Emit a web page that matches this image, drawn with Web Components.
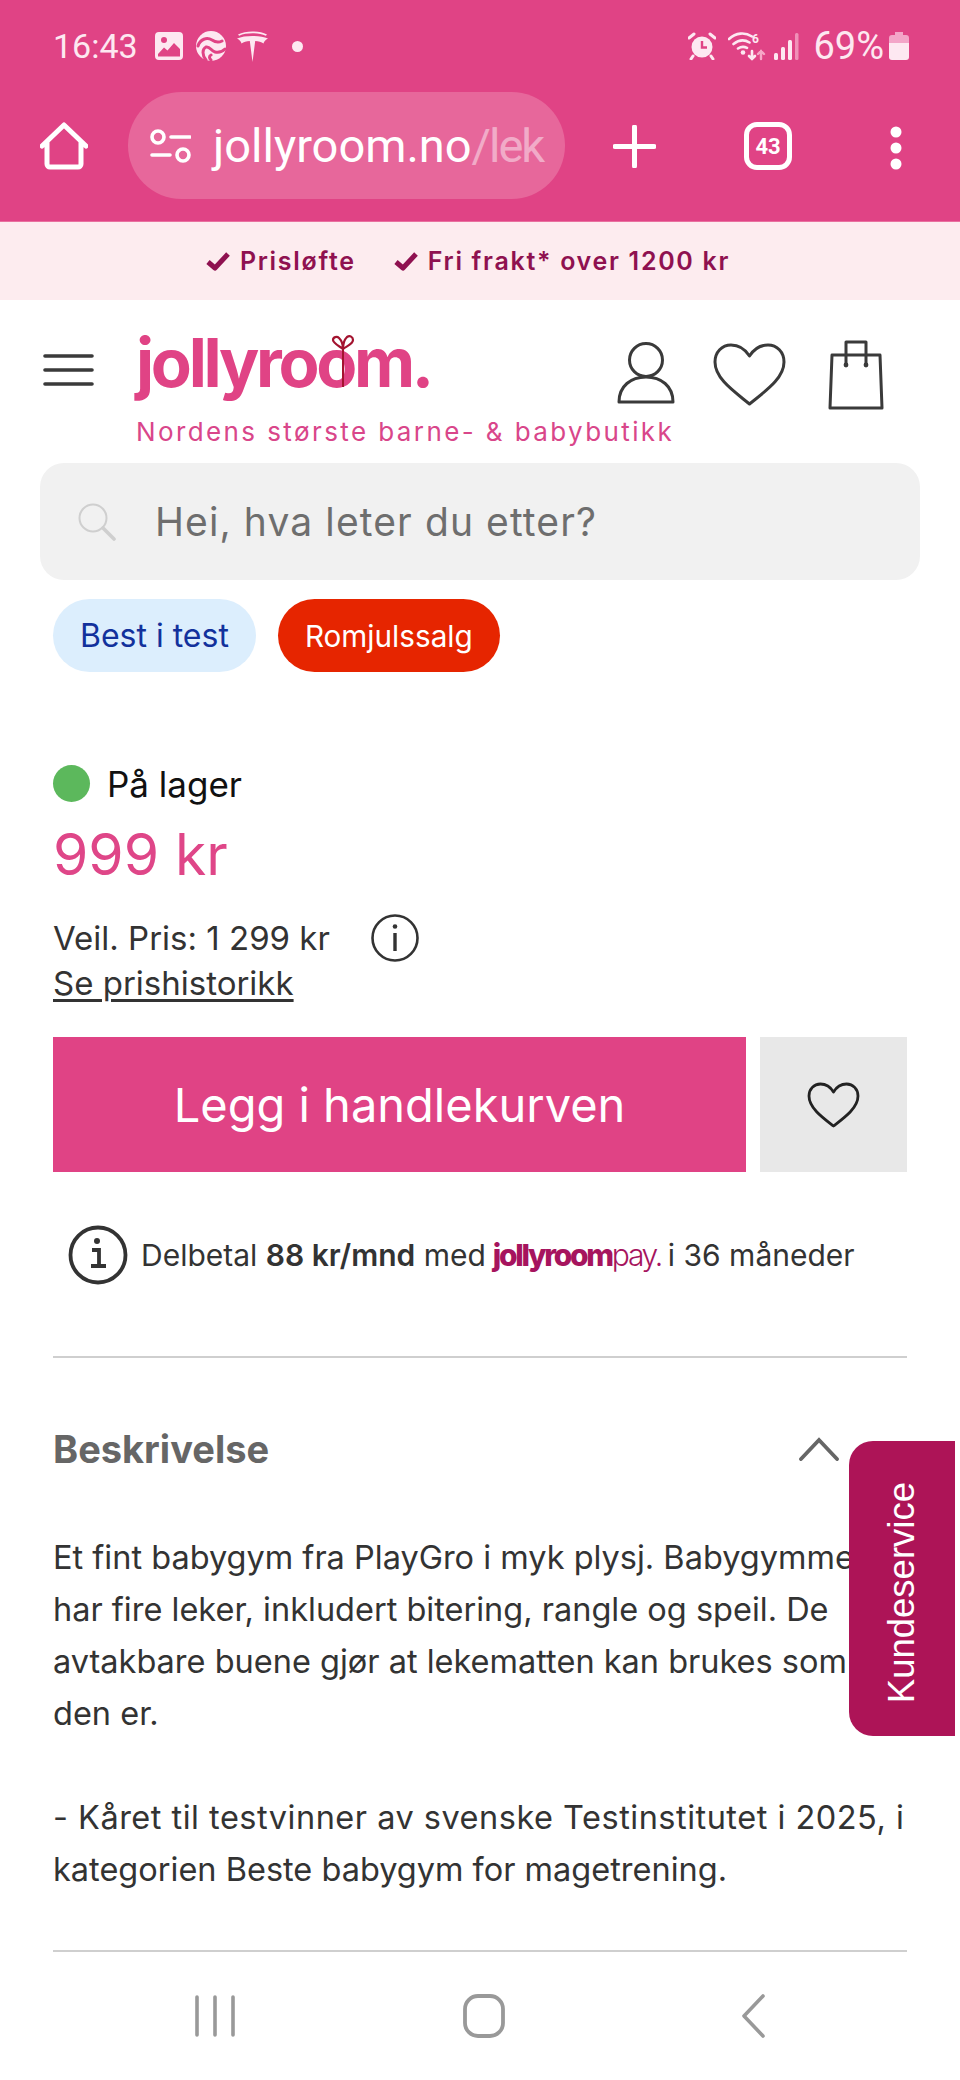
<!doctype html>
<html lang="no">
<head>
<meta charset="utf-8">
<title>Jollyroom</title>
<style>
  html, body { margin: 0; padding: 0; background: #fff; }
  body { width: 960px; height: 2080px; overflow: hidden; position: relative; font-family: Inter, "Liberation Sans", sans-serif; }
</style>
</head>
<body>

<template id="status-bar-template">
  <style>
    :host { display: flex; align-items: center; height: 88px; padding: 4px 51px 0 53px; box-sizing: border-box; background: #e04385; color: #fde8f1; font: 400 34px Roboto, sans-serif; }
    .left, .right { display: flex; align-items: center; }
    .right { margin-left: auto; }
    svg { display: block; flex: none; }
    .time { margin-right: 17px; }
    .pct { margin: 0 5px 0 14px; font-size: 38px; }
  </style>
  <div class="left">
    <span class="time">16:43</span>
    <svg width="28" height="28" viewBox="0 0 28 28"><path fill="#fde8f1" fill-rule="evenodd" d="M4 0h20a4 4 0 0 1 4 4v20a4 4 0 0 1-4 4H4a4 4 0 0 1-4-4V4a4 4 0 0 1 4-4zM3 22v2.500h22V17l-6-6-6.500 7.500-3.500-3z"/><circle cx="9" cy="8" r="3" fill="#e04385"/></svg>
    <svg style="margin-left:13px" width="30" height="30" viewBox="0 0 30 30"><circle cx="15" cy="15" r="15" fill="#fde8f1"/><path fill="none" stroke="#e04385" stroke-width="3" stroke-linecap="round" d="M2 15C4 8 11 6 16 9c3 2 6 3 10 1M10 29c-4-5-4-11 0-13 4-1 5 4 9 5 4 1 7 0 10-3M15 29c-2-2-2-4 0-5"/></svg>
    <svg style="margin-left:11px" width="31" height="31" viewBox="0 0 31 31"><path fill="#fde8f1" d="M15.500 31 12.800 10C9.500 10.200 6.500 11 4.500 12.500 4 10.500 2.500 8.500 0 7.500 4 5.800 9.500 5 15.500 5S27 5.800 31 7.500c-2.500 1-4 3-4.500 5-2-1.500-5-2.300-8.300-2.500z"/><path fill="#fde8f1" d="M1 3.500C5 1.500 10 .5 15.500.5s10.500 1 14.500 3c-.5.600-.8.800-1.200 1.200C25 3 20.500 2.300 15.500 2.300S6 3 2.200 4.700C1.800 4.300 1.500 4 1 3.500z"/></svg>
    <svg style="margin-left:24px" width="11" height="11" viewBox="0 0 11 11"><circle cx="5.500" cy="5.500" r="5.500" fill="#fde8f1"/></svg>
  </div>
  <div class="right">
    <svg width="28" height="28" viewBox="0 0 28 28"><circle cx="14" cy="15" r="10.500" fill="#fde8f1"/><path d="M14 9v6.500h5" fill="none" stroke="#e04385" stroke-width="2.400"/><path d="M1 6l5-4M27 6l-5-4M5 24l-2 3M23 24l2 3" stroke="#fde8f1" stroke-width="3" stroke-linecap="round"/></svg>
    <svg style="margin-left:12px" width="38" height="30" viewBox="0 0 38 30"><g fill="none" stroke="#fde8f1" stroke-width="2.600" stroke-linecap="round"><path d="M1 8c7-6.500 16-7 23-2.500M5.500 13c5-4 11-4.500 16-1.500M10 17.500c3-2 6-2.200 9-.6"/><path d="M24 20v8M21 25l3 3 3-3"/></g><circle cx="15" cy="21.500" r="2.300" fill="#fde8f1"/><g fill="none" stroke="#f7a6c7" stroke-width="2.400" stroke-linecap="round"><path d="M33 28v-8M30 23l3-3 3 3"/></g><text x="24" y="12" font-size="12" font-weight="700" fill="#fde8f1" font-family="Roboto, sans-serif">6</text></svg>
    <svg style="margin-left:8px" width="25" height="27" viewBox="0 0 25 27"><g fill="#fde8f1"><rect x="0" y="20" width="4" height="7" rx="1.500"/><rect x="7" y="14" width="4" height="13" rx="1.500"/><rect x="14" y="7" width="4" height="20" rx="1.500"/></g><rect x="21" y="0" width="3.500" height="27" rx="1.500" fill="#f090b8"/></svg>
    <span class="pct">69%</span>
    <svg width="20" height="28" viewBox="0 0 20 28"><path fill="#f3a5c8" d="M6 0h8v3h3a3 3 0 0 1 3 3v6H0V6a3 3 0 0 1 3-3h3z"/><path fill="#fde8f1" d="M0 11h20v14a3 3 0 0 1-3 3H3a3 3 0 0 1-3-3z"/></svg>
  </div>
</template>

<template id="browser-toolbar-template">
  <style>
    :host { display: flex; align-items: flex-start; height: 134px; box-sizing: border-box; padding-top: 4px; background: #e04385; color: #fff; border-bottom: 1px solid #e9709f; }
    svg { display: block; flex: none; }
    .home { margin: 30px 0 0 40px; }
    .url { width: 437px; height: 107px; margin-left: 40px; box-sizing: border-box; padding: 0 0 0 22px; border-radius: 54px; background: #e7679b; display: flex; align-items: center; }
    .addr { margin-left: 22px; font: 400 47px Roboto, sans-serif; white-space: nowrap; }
    .addr span { opacity: .45; letter-spacing: -2px; }
    .plus { margin: 33px 0 0 48px; }
    .tabs { margin: 30px 0 0 88px; width: 48px; height: 48px; box-sizing: border-box; border: 5px solid #fff; border-radius: 13px; display: flex; align-items: center; justify-content: center; font: 700 22px Roboto, sans-serif; }
    .more { margin: 34px 0 0 98px; }
  </style>
  <svg class="home" width="48" height="48" viewBox="0 0 48 48"><path d="M2 24 24 3l22 21M7 20v22a3 3 0 0 0 3 3h28a3 3 0 0 0 3-3V20" fill="none" stroke="#fff" stroke-width="5" stroke-linecap="round" stroke-linejoin="round"/></svg>
  <div class="url">
    <svg width="41" height="34" viewBox="0 0 41 34"><g fill="none" stroke="#fff" stroke-width="3.600" stroke-linecap="round"><circle cx="8" cy="8" r="6"/><path d="M21 8h19M2 26h18"/><circle cx="33" cy="26" r="6"/></g></svg>
    <div class="addr">jollyroom.no<span>/lek</span></div>
  </div>
  <svg class="plus" width="43" height="43" viewBox="0 0 43 43"><path d="M21.500 2v39M2 21.500h39" stroke="#fff" stroke-width="5" stroke-linecap="round"/></svg>
  <div class="tabs">43</div>
  <svg class="more" width="12" height="44" viewBox="0 0 12 44"><g fill="#fff"><circle cx="6" cy="6" r="5.500"/><circle cx="6" cy="22" r="5.500"/><circle cx="6" cy="38" r="5.500"/></g></svg>
</template>

<template id="promo-bar-template">
  <style>
    :host { display: flex; justify-content: center; align-items: center; gap: 37px; height: 78px; box-sizing: border-box; padding-right: 25px; background: #fdecef; color: #8f1150; font: 600 25px Inter, sans-serif; letter-spacing: 1.700px; }
    .item { display: flex; align-items: center; gap: 9px; }
    svg { display: block; }
  </style>
  <div class="item"><svg width="26" height="20" viewBox="0 0 26 20"><path d="M3 11l7 6L23 3" fill="none" stroke="#8f1150" stroke-width="5" stroke-linejoin="round"/></svg>Prisløfte</div>
  <div class="item"><svg width="26" height="20" viewBox="0 0 26 20"><path d="M3 11l7 6L23 3" fill="none" stroke="#8f1150" stroke-width="5" stroke-linejoin="round"/></svg>Fri frakt* over 1200 kr</div>
</template>

<template id="site-header-template">
  <style>
    :host { display: block; position: relative; height: 163px; color: #3a3a3a; }
    .row { display: flex; align-items: flex-start; }
    .burger { margin: 54px 0 0 43px; }
    .brand { margin-left: 42px; }
    .logo { position: relative; height: 105px; font: 700 67px/125px Inter, sans-serif; letter-spacing: -3.300px; color: #e04385; white-space: nowrap; width: 300px; }
    .bow { position: absolute; left: 195px; top: 35px; }
    .tag { margin-top: 11px; font: 400 26px/32px Inter, sans-serif; letter-spacing: 2.400px; color: #d9468a; white-space: nowrap; }
    .icon { position: absolute; display: block; }
  </style>
  <div class="row">
    <svg class="burger" width="51" height="32" viewBox="0 0 51 32"><path d="M2 2h47M2 16h47M2 30h47" stroke="#3a3a3a" stroke-width="3.600" stroke-linecap="round"/></svg>
    <div class="brand">
      <div class="logo">jollyroom.<svg class="bow" width="24" height="52" viewBox="0 0 24 52"><path d="M12 12v40" stroke="#a3132f" stroke-width="2"/><path d="M12 14C8 11 2 8 2 5c0-3 4-4 6-2 2 2 4 6 4 11 0-5 2-10 4-12 3-2 6 0 6 3 0 4-6 6-10 9" fill="none" stroke="#a3132f" stroke-width="2.200"/></svg></div>
      <div class="tag">Nordens største barne- &amp; babybutikk</div>
    </div>
  </div>
  <svg class="icon" style="left:617px;top:42px" width="58" height="62" viewBox="0 0 58 62"><g fill="none" stroke="#3a3a3a" stroke-width="3" stroke-linejoin="round"><circle cx="29" cy="18" r="16.500"/><path d="M2 60C2 44 14 35 29 35s27 9 27 25z"/></g></svg>
  <svg class="icon" style="left:713px;top:43px" width="73" height="63" viewBox="0 0 73 63"><path d="M36.500 61C22 49 2 36 2 19 2 9 9 2 18 2c8 0 14 4 18.500 11C41 6 47 2 55 2c9 0 16 7 16 17 0 17-20 30-34.500 42z" fill="none" stroke="#3a3a3a" stroke-width="3" stroke-linejoin="round"/></svg>
  <svg class="icon" style="left:828px;top:40px" width="56" height="70" viewBox="0 0 56 70"><g fill="none" stroke="#3a3a3a" stroke-width="3" stroke-linejoin="round"><path d="M4 15h48l2 53H2z"/><path d="M18 24V2h20v22"/></g><circle cx="18" cy="25" r="2.400" fill="#3a3a3a"/><circle cx="38" cy="25" r="2.400" fill="#3a3a3a"/></svg>
</template>

<template id="search-box-template">
  <style>
    :host { display: flex; align-items: center; height: 117px; margin: 0 40px; padding-left: 38px; border-radius: 24px; background: #f1f1f1; color: #6e6e6e; font: 400 39px Inter, sans-serif; letter-spacing: 1.100px; }
    svg { display: block; margin-right: 39px; }
  </style>
  <svg width="38" height="38" viewBox="0 0 38 38"><g fill="none" stroke="#cfcfcf"><circle cx="15" cy="15" r="13.500" stroke-width="2"/><path d="M25 25l11 11" stroke-width="3.600" stroke-linecap="round"/></g></svg>
  <slot></slot>
</template>

<template id="tag-pill-template">
  <style>
    :host { display: inline-flex; align-items: center; height: 73px; padding: 0 27px; border-radius: 37px; font: 400 var(--pill-size, 30px) Inter, sans-serif; background: var(--pill-bg); color: var(--pill-fg); }
  </style>
  <slot></slot>
</template>

<template id="pill-row-template">
  <style>
    :host { display: flex; gap: 22px; margin: 19px 53px 0; }
  </style>
  <slot></slot>
</template>

<template id="price-block-template">
  <style>
    :host { display: block; margin: 93px 53px 0; color: #333; }
    .stock { display: flex; align-items: center; gap: 17px; height: 37px; font-size: 35px; color: #111; }
    .dot { width: 37px; height: 37px; border-radius: 50%; background: #5cb85c; }
    .price { margin-top: 13px; font: 400 57px/80px Inter, sans-serif; color: #df4688; }
    .veil { display: flex; align-items: center; margin-top: 19px; height: 48px; font-size: 33px; }
    .info { margin-left: 41px; display: block; }
    .hist { display: block; margin-top: -1px; font-size: 33px; line-height: 44px; text-decoration: underline; text-underline-offset: 4px; }
  </style>
  <div class="stock"><span class="dot"></span>På lager</div>
  <div class="price">999 kr</div>
  <div class="veil">Veil. Pris: 1 299 kr
    <svg class="info" width="48" height="48" viewBox="0 0 48 48"><circle cx="24" cy="24" r="22.500" fill="none" stroke="#333" stroke-width="2.600"/><rect x="22.300" y="19" width="3.400" height="18" fill="#333"/><circle cx="24" cy="12.500" r="2.300" fill="#333"/></svg>
  </div>
  <a class="hist">Se prishistorikk</a>
</template>

<template id="buy-row-template">
  <style>
    :host { display: flex; gap: 14px; margin: 32px 53px 0; height: 135px; }
    .add { flex: 1; display: flex; align-items: center; justify-content: center; background: #e04385; color: #fff; font: 400 47px Inter, sans-serif; }
    .fav { width: 147px; display: flex; align-items: center; justify-content: center; background: #e8e8e8; }
    svg { display: block; }
  </style>
  <div class="add"><slot></slot></div>
  <div class="fav"><svg width="53" height="46" viewBox="0 0 53 46"><path d="M26.500 44C16 36 2 26 2 14 2 7 7 2 13.500 2 19 2 23.500 5 26.500 10 29.500 5 34 2 39.500 2 46 2 51 7 51 14c0 12-14 22-24.500 30z" fill="none" stroke="#222" stroke-width="2.800" stroke-linejoin="round"/></svg></div>
</template>

<template id="part-pay-template">
  <style>
    :host { display: flex; align-items: center; height: 60px; margin: 53px 0 0 68px; color: #333; font: 400 30px Inter, sans-serif; white-space: nowrap; }
    svg { display: block; margin-right: 13px; }
    b { font-weight: 600; }
    .brand { margin: 0 7px; color: #a6145e; font-weight: 800; letter-spacing: -2.300px; }
    .brand i { font-style: normal; font-weight: 300; }
  </style>
  <svg width="60" height="60" viewBox="0 0 60 60"><circle cx="30" cy="30" r="27.500" fill="none" stroke="#333" stroke-width="3.800"/><path d="M24 25h7v15M23 41h15" fill="none" stroke="#333" stroke-width="3.800"/><circle cx="29" cy="16" r="3" fill="#333"/></svg>
  <span>Delbetal <b>88 kr/mnd</b> med<span class="brand">jollyroom<i>pay.</i></span>i 36 måneder</span>
</template>

<template id="desc-section-template">
  <style>
    :host { display: block; margin: 71px 53px 0; color: #333; }
    .rule { height: 2px; background: #cfcfcf; }
    .head { display: flex; align-items: center; justify-content: space-between; height: 50px; margin-top: 66px; color: #666; font: 700 38px Inter, sans-serif; }
    svg { display: block; margin-right: 67px; }
    .body { margin-top: 58px; font: 400 32.500px/52px Inter, sans-serif; white-space: nowrap; }
    .end { margin-top: 54px; }
  </style>
  <div class="rule"></div>
  <div class="head">Beskrivelse
    <svg width="42" height="24" viewBox="0 0 42 24"><path d="M3 22 21 3l18 19" fill="none" stroke="#666" stroke-width="3.800" stroke-linecap="round"/></svg>
  </div>
  <div class="body"><slot></slot></div>
  <div class="rule end"></div>
</template>

<template id="side-tab-template">
  <style>
    :host { position: absolute; left: 849px; top: 1441px; width: 106px; height: 295px; box-sizing: border-box; padding-top: 8px; display: flex; align-items: center; justify-content: center; background: #ad1457; border-radius: 24px 0 0 24px; color: #fff; font: 400 36.500px "Liberation Sans", sans-serif; }
    span { writing-mode: vertical-rl; transform: rotate(180deg); }
  </style>
  <span><slot></slot></span>
</template>

<template id="nav-bar-template">
  <style>
    :host { position: absolute; left: 0; right: 0; bottom: 0; height: 100px; }
    svg { position: absolute; display: block; }
  </style>
  <svg style="left:194px;top:14px" width="42" height="44" viewBox="0 0 42 44"><path d="M3 3v38M21 3v38M39 3v38" stroke="#999" stroke-width="3.600" stroke-linecap="round"/></svg>
  <svg style="left:463px;top:14px" width="42" height="44" viewBox="0 0 42 44"><rect x="2" y="2" width="38" height="40" rx="13" fill="none" stroke="#999" stroke-width="3.800"/></svg>
  <svg style="left:740px;top:13px" width="26" height="46" viewBox="0 0 26 46"><path d="M23 3 4 23l19 20" fill="none" stroke="#999" stroke-width="3.600" stroke-linecap="round" stroke-linejoin="round"/></svg>
</template>

<status-bar></status-bar>
<browser-toolbar></browser-toolbar>
<promo-bar></promo-bar>
<site-header></site-header>
<search-box>Hei, hva leter du etter?</search-box>
<pill-row>
  <tag-pill style="--pill-bg:#dceefd;--pill-fg:#12319c;--pill-size:32px">Best i test</tag-pill>
  <tag-pill style="--pill-bg:#e62500;--pill-fg:#fff;--pill-size:29.700px">Romjulssalg</tag-pill>
</pill-row>
<price-block></price-block>
<buy-row>Legg i handlekurven</buy-row>
<part-pay></part-pay>
<desc-section>
  Et fint babygym fra PlayGro i myk plysj. Babygymmet<br>
  har fire leker, inkludert bitering, rangle og speil. De<br>
  avtakbare buene gjør at lekematten kan brukes som<br>
  den er.<br>
  <br>
  <span style="letter-spacing:.5px">- Kåret til testvinner av svenske Testinstitutet i 2025, i</span><br>
  kategorien Beste babygym for magetrening.
</desc-section>
<side-tab>Kundeservice</side-tab>
<nav-bar></nav-bar>

<script>
  (function (document, window) {

    class ShadowTemplate extends HTMLElement {
      connectedCallback() {
        if (!this.shadowRoot) {
          const shadowRoot = this.attachShadow({ mode: 'open' });
          const template = document.getElementById(this.localName + '-template');
          shadowRoot.appendChild(template.content.cloneNode(true));
        }
      }
    }

    ['status-bar', 'browser-toolbar', 'promo-bar', 'site-header', 'search-box', 'tag-pill', 'pill-row',
      'price-block', 'buy-row', 'part-pay', 'desc-section', 'side-tab', 'nav-bar'].forEach((name) => {
      window.customElements.define(name, class extends ShadowTemplate {});
    });

  })(document, window);
</script>
</body>
</html>
